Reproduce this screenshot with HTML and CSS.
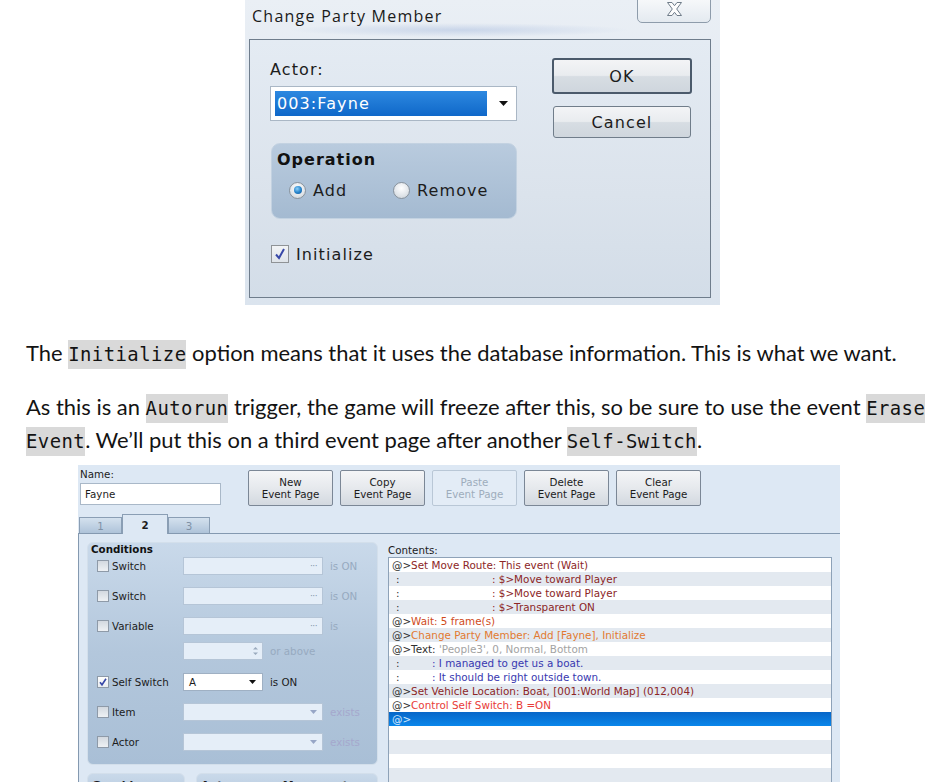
FILE: index.html
```html
<!DOCTYPE html>
<html>
<head>
<meta charset="utf-8">
<title>Change Party Member</title>
<link rel="stylesheet" href="styles.css">
</head>
<body>
<div class="page">
  <div class="dlg">
    <div class="dlg-title">
      <span class="dlg-caption">Change Party Member</span>
      <span class="dlg-close">
        <svg width="17" height="15" viewBox="0 0 17 15"><path d="M1.5 0.5h4.5l2.5 3.2 2.5-3.2h4.5l-4.8 6.5 4.8 6.5h-4.5l-2.5-3.2-2.5 3.2h-4.5l4.8-6.5z" fill="#fdfdfd" stroke="#6f7c89" stroke-linejoin="round"/></svg>
      </span>
    </div>
    <div class="dlg-panel">
      <div class="dlg-left">
        <div class="dlg-lbl">Actor:</div>
        <div class="combo">
          <span class="combo-sel">003:Fayne</span>
          <svg class="combo-arrow" width="9" height="5" viewBox="0 0 9 5"><path d="M0 0h9L4.5 5z" fill="#111"/></svg>
        </div>
        <div class="opgroup">
          <div class="op-title">Operation</div>
          <div class="op-radios">
            <span class="radio-item first"><span class="radio on"></span>Add</span>
            <span class="radio-item"><span class="radio"></span>Remove</span>
          </div>
        </div>
        <div class="init">
          <span class="chk"><svg width="14" height="14" viewBox="0 0 14 14"><path d="M3 7.5l3 3.5 5-9" fill="none" stroke="#3848a8" stroke-width="2"/></svg></span>
          Initialize
        </div>
      </div>
      <div class="dlg-right">
        <div class="wbtn wbtn-default">OK</div>
        <div class="wbtn wbtn-cancel">Cancel</div>
      </div>
    </div>
  </div>

  <p class="para p1">The <span class="hl">Initialize</span> option means that it uses the database information. This is what we want.</p>
  <p class="para p2">As this is an <span class="hl">Autorun</span> trigger, the game will freeze after this, so be sure to use the event <span class="hl">Erase</span><br><span class="hl">Event</span>. We’ll put this on a third event page after another <span class="hl">Self-Switch</span>.</p>

  <div class="ed">
    <div class="ed-top">
      <div class="ed-name">
        <div class="ed-lbl">Name:</div>
        <div class="ed-input">Fayne</div>
      </div>
      <div class="ed-btns">
        <div class="ebtn">New<br>Event Page</div>
        <div class="ebtn">Copy<br>Event Page</div>
        <div class="ebtn disabled">Paste<br>Event Page</div>
        <div class="ebtn">Delete<br>Event Page</div>
        <div class="ebtn">Clear<br>Event Page</div>
      </div>
    </div>
    <div class="tabs">
      <div class="tab t1">1</div>
      <div class="tab t2 active">2</div>
      <div class="tab t3">3</div>
    </div>
    <div class="ed-body">
      <div class="ed-leftcol">
        <div class="cgroup">
          <div class="cg-title">Conditions</div>
          <div class="crow r1"><span class="cb"></span><span class="clbl">Switch</span><span class="fld"><span class="dots">···</span></span><span class="suf">is ON</span></div>
          <div class="crow r2"><span class="cb"></span><span class="clbl">Switch</span><span class="fld"><span class="dots">···</span></span><span class="suf">is ON</span></div>
          <div class="crow r3"><span class="cb"></span><span class="clbl">Variable</span><span class="fld"><span class="dots">···</span></span><span class="suf">is</span></div>
          <div class="crow r4"><span class="cspacer"></span><span class="fld small"><svg width="7" height="12" viewBox="0 0 7 12"><path d="M1 4.5L3.5 2 6 4.5zM1 7.5L3.5 10 6 7.5z" fill="#9aaabd"/></svg></span><span class="suf">or above</span></div>
          <div class="crow r5"><span class="cb on"><svg width="10" height="10" viewBox="0 0 10 10"><path d="M2 5.2l2 2.6 4-6" fill="none" stroke="#3848a8" stroke-width="1.6"/></svg></span><span class="clbl">Self Switch</span><span class="sel">A<svg width="7" height="4" viewBox="0 0 7 4"><path d="M0 0h7L3.5 4z" fill="#111"/></svg></span><span class="suf dark">is ON</span></div>
          <div class="crow r6"><span class="cb"></span><span class="clbl">Item</span><span class="fld"><svg width="7" height="4" viewBox="0 0 7 4"><path d="M0 0h7L3.5 4z" fill="#97a6c6"/></svg></span><span class="suf ex">exists</span></div>
          <div class="crow r7"><span class="cb"></span><span class="clbl">Actor</span><span class="fld"><svg width="7" height="4" viewBox="0 0 7 4"><path d="M0 0h7L3.5 4z" fill="#97a6c6"/></svg></span><span class="suf ex">exists</span></div>
        </div>
        <div class="subgroups">
          <div class="sgroup g1">Graphic</div>
          <div class="sgroup g2">Autonomous Movement</div>
        </div>
      </div>
      <div class="ed-rightcol">
        <div class="ct-lbl">Contents:</div>
        <div class="list">
          <div class="lrow"><span class="k">@&gt;</span><span class="mr">Set Move Route: This event (Wait)</span></div>
          <div class="lrow"><span class="ind1 k">:</span><span class="mr">: $&gt;Move toward Player</span></div>
          <div class="lrow"><span class="ind1 k">:</span><span class="mr">: $&gt;Move toward Player</span></div>
          <div class="lrow"><span class="ind1 k">:</span><span class="mr">: $&gt;Transparent ON</span></div>
          <div class="lrow"><span class="k">@&gt;</span><span class="wt">Wait: 5 frame(s)</span></div>
          <div class="lrow"><span class="k">@&gt;</span><span class="pm">Change Party Member: Add [Fayne], Initialize</span></div>
          <div class="lrow"><span class="k">@&gt;Text: </span><span class="gr">'People3', 0, Normal, Bottom</span></div>
          <div class="lrow"><span class="ind2 k">:</span><span class="msg">: I managed to get us a boat.</span></div>
          <div class="lrow"><span class="ind2 k">:</span><span class="msg">: It should be right outside town.</span></div>
          <div class="lrow"><span class="k">@&gt;</span><span class="mr">Set Vehicle Location: Boat, [001:World Map] (012,004)</span></div>
          <div class="lrow"><span class="k">@&gt;</span><span class="cs">Control Self Switch: B =ON</span></div>
          <div class="lrow selected">@&gt;</div>
          <div class="lrow"></div>
          <div class="lrow"></div>
          <div class="lrow"></div>
          <div class="lrow"></div>
          <div class="lrow"></div>
        </div>
      </div>
    </div>
  </div>
</div>
</body>
</html>
```

FILE: styles.css
```css
* { box-sizing: border-box; }

body {
  margin: 0;
  background: #ffffff;
  font-family: "Lato", "Liberation Sans", sans-serif;
  color: #111;
}

.page { width: 939px; }

/* ---------- top dialog ---------- */
.dlg {
  margin-left: 245px;
  width: 475px;
  height: 305px;
  padding: 0 9px 7px 4px;
  display: flex;
  flex-direction: column;
  background: linear-gradient(180deg, #eaeff5 0%, #e2e9f1 40%, #dbe4ee 100%);
  font-family: "DejaVu Sans", sans-serif;
  font-size: 16px;
  letter-spacing: 1.1px;
  color: #1c1c1c;
}

.dlg-title {
  height: 39px;
  flex: none;
  display: flex;
  justify-content: space-between;
  align-items: flex-start;
  background: radial-gradient(ellipse 170px 7px at 210px 30px, rgba(120, 150, 205, 0.28), rgba(120, 150, 205, 0) 100%);
}

.dlg-caption {
  margin: 6px 0 0 3px;
  font-family: "Open Sans", sans-serif;
  font-size: 16px;
  line-height: 20px;
  letter-spacing: 1.25px;
  color: #1a1a1a;
}

.dlg-close {
  width: 74px;
  height: 24px;
  margin-top: -1px;
  display: flex;
  justify-content: center;
  padding-top: 2px;
  border: 1px solid #8e9cab;
  border-radius: 0 0 5px 5px;
  background: linear-gradient(180deg, #f6f8fa, #e4eaf0);
}

.dlg-panel {
  flex: 1;
  display: flex;
  align-items: flex-start;
  padding: 20px 0 0 20px;
  border: 1px solid #6f7d8c;
  background: linear-gradient(180deg, #e4ebf3 0%, #dbe3ec 60%, #d3dde8 100%);
}

.dlg-left { width: 247px; }

.dlg-lbl { line-height: 20px; }

.combo {
  margin-top: 6px;
  height: 35px;
  display: flex;
  align-items: center;
  padding-left: 4px;
  border: 1px solid #aab7c5;
  background: #ffffff;
}

.combo-sel {
  width: 212px;
  height: 25px;
  padding: 2px 0 0 2px;
  line-height: 21px;
  color: #ffffff;
  background: linear-gradient(180deg, #2d88e0, #0f68c9);
}

.combo-arrow { margin-left: 12px; }

.opgroup {
  width: 246px;
  height: 76px;
  margin: 22px 0 0 1px;
  padding: 6px 0 0 5px;
  border: 1px solid #c3d2e1;
  border-radius: 9px;
  background: linear-gradient(180deg, #b9cbde, #a4bad1);
}

.op-title {
  font-weight: bold;
  line-height: 20px;
  letter-spacing: 1px;
  color: #111;
}

.op-radios {
  margin-top: 10px;
  padding-left: 12px;
  display: flex;
  align-items: center;
  height: 20px;
}

.radio-item {
  display: inline-flex;
  align-items: center;
  gap: 7px;
}

.radio-item.first { width: 104px; }

.radio {
  width: 17px;
  height: 17px;
  border-radius: 50%;
  display: inline-flex;
  align-items: center;
  justify-content: center;
  border: 1px solid #88929c;
  background: radial-gradient(circle at 50% 35%, #ffffff 0%, #e3e7eb 55%, #c9d0d7 100%);
}

.radio.on::after {
  content: "";
  width: 8px;
  height: 8px;
  border-radius: 50%;
  background: radial-gradient(circle at 40% 35%, #8fd0f7 0%, #2a88cf 50%, #0c4f91 100%);
}

.init {
  margin: 25px 0 0 1px;
  height: 20px;
  display: flex;
  align-items: center;
  gap: 7px;
}

.chk {
  width: 18px;
  height: 18px;
  display: inline-flex;
  align-items: center;
  justify-content: center;
  border: 1px solid #8f9396;
  background: linear-gradient(180deg, #f2f4f6, #dfe4e9);
}

.dlg-right {
  margin: -2px 0 0 35px;
}

.wbtn {
  display: flex;
  align-items: center;
  justify-content: center;
  border-radius: 3px;
  background: linear-gradient(180deg, #f3f4f6 0%, #e9ecef 48%, #d7dde3 52%, #cfd6dd 100%);
}

.wbtn-default {
  width: 140px;
  height: 36px;
  border: 2px solid #4b5a6b;
}

.wbtn-cancel {
  width: 138px;
  height: 32px;
  margin: 12px 0 0 1px;
  border: 1px solid #707d8a;
}

/* ---------- paragraphs ---------- */
.para {
  margin: 0 0 0 26px;
  font-size: 21.95px;
  line-height: 33px;
  white-space: nowrap;
  color: #131313;
}

.p1 { margin-top: 31px; }
.p2 { margin-top: 21px; }

.hl {
  display: inline-block;
  line-height: 29px;
  font-family: "DejaVu Sans Mono", monospace;
  font-size: 18.9px;
  letter-spacing: 0.45px;
  background: #d9d9d9;
}

/* ---------- event editor ---------- */
.ed {
  margin: 9px 0 0 78px;
  width: 762px;
  height: 317px;
  overflow: hidden;
  background: #dde8f4;
  font-family: "DejaVu Sans", sans-serif;
  font-size: 10.3px;
  color: #1c1c1c;
}

.ed-top {
  height: 41px;
  display: flex;
  padding: 3px 0 0 2px;
}

.ed-name { width: 141px; }

.ed-lbl { line-height: 13px; }

.ed-input {
  margin-top: 2px;
  height: 22px;
  line-height: 20px;
  padding-left: 4px;
  border: 1px solid #a9b8c8;
  background: #ffffff;
}

.ed-btns {
  margin: 2px 0 0 27px;
  display: flex;
  gap: 7px;
}

.ebtn {
  width: 85px;
  height: 36px;
  display: flex;
  align-items: center;
  justify-content: center;
  text-align: center;
  line-height: 12px;
  border: 1px solid #7b8796;
  border-radius: 2px;
  background: linear-gradient(180deg, #f4f5f7 0%, #e6e9ed 50%, #d3d9e0 100%);
}

.ebtn.disabled {
  color: #9eacbc;
  border-color: #b9c7d6;
  background: #e3ecf6;
}

.tabs {
  margin-top: 8px;
  height: 19px;
  padding-left: 1px;
  display: flex;
  align-items: flex-end;
}

.tab {
  height: 16px;
  display: flex;
  align-items: center;
  justify-content: center;
  border: 1px solid #8a9eb4;
  border-bottom: none;
  color: #7f91a6;
  background: linear-gradient(180deg, #d4e1ee, #aec3d9);
}

.t1 { width: 43px; }
.t2 { width: 46px; }
.t3 { width: 42px; }

.tab.active {
  height: 20px;
  margin-bottom: -1px;
  position: relative;
  z-index: 1;
  font-weight: bold;
  color: #1c1c1c;
  background: #dde8f4;
}

.ed-body {
  height: 260px;
  display: flex;
  align-items: flex-start;
  padding: 8px 0 0 8px;
  border-top: 1px solid #8499b0;
  border-left: 1px solid #8499b0;
}

.ed-leftcol { width: 291px; }

.cgroup {
  height: 223px;
  padding: 0 0 0 3px;
  border: 1px solid #d3dfeb;
  border-radius: 6px;
  background: linear-gradient(180deg, #c9d9ea 0%, #b3c7dc 50%, #a9bfd6 100%);
}

.cg-title {
  line-height: 13px;
  font-weight: bold;
  color: #111;
}

.crow {
  height: 18px;
  display: flex;
  align-items: center;
  padding-left: 6px;
}

.r1 { margin-top: 1px; }
.r2, .r3, .r6, .r7 { margin-top: 12px; }
.r4 { margin-top: 7px; }
.r5 { margin-top: 13px; }

.cb {
  width: 12px;
  height: 12px;
  margin-right: 3px;
  display: inline-flex;
  align-items: center;
  justify-content: center;
  border: 1px solid #8e9aa8;
  background: linear-gradient(180deg, #d3d9e0, #eef1f4);
}

.cb.on { background: linear-gradient(180deg, #ffffff, #e8ecf0); }

.clbl { width: 71px; }

.cspacer { width: 86px; }

.fld {
  width: 140px;
  height: 18px;
  display: flex;
  align-items: center;
  justify-content: flex-end;
  padding-right: 5px;
  border: 1px solid #b5c5d7;
  background: #e5eef8;
  color: #8193a8;
}

.fld.small { width: 80px; padding-right: 3px; }

.dots { font-size: 9px; letter-spacing: -0.5px; }

.sel {
  width: 80px;
  height: 18px;
  display: flex;
  align-items: center;
  justify-content: space-between;
  padding: 0 6px 0 5px;
  border: 1px solid #9fb0c3;
  background: #ffffff;
}

.suf {
  margin-left: 7px;
  color: #97aac0;
}

.suf.dark { color: #1c1c1c; }
.suf.ex { color: #a5a8cd; }

.subgroups {
  margin-top: 8px;
  display: flex;
  gap: 11px;
}

.sgroup {
  height: 30px;
  padding: 5px 0 0 4px;
  font-weight: bold;
  font-size: 11px;
  border: 1px solid #d3dfeb;
  border-radius: 6px;
  background: linear-gradient(180deg, #c9d9ea, #b3c7dc);
}

.g1 { width: 98px; }
.g2 { width: 182px; }

.ed-rightcol {
  width: 444px;
  margin: 1px 0 0 10px;
}

.ct-lbl { line-height: 14px; }

.list {
  border: 1px solid #8ea2b8;
  background: #ffffff;
}

.lrow {
  height: 14px;
  line-height: 14px;
  padding-left: 3px;
  white-space: nowrap;
  font-size: 10.4px;
}

.lrow:nth-child(even) { background: #e3e9f0; }

.lrow.selected {
  color: #d6e8fb;
  background: linear-gradient(180deg, #0766c8, #0a86ea);
}

.k { color: #303030; }
.ind1 { display: inline-block; width: 100px; padding-left: 4px; }
.ind2 { display: inline-block; width: 40px; padding-left: 4px; }
.mr { color: #8c2626; }
.wt { color: #d04b1c; }
.pm { color: #e27a30; }
.gr { color: #a3a3a3; }
.msg { color: #3838b0; }
.cs { color: #e83c38; }
```
